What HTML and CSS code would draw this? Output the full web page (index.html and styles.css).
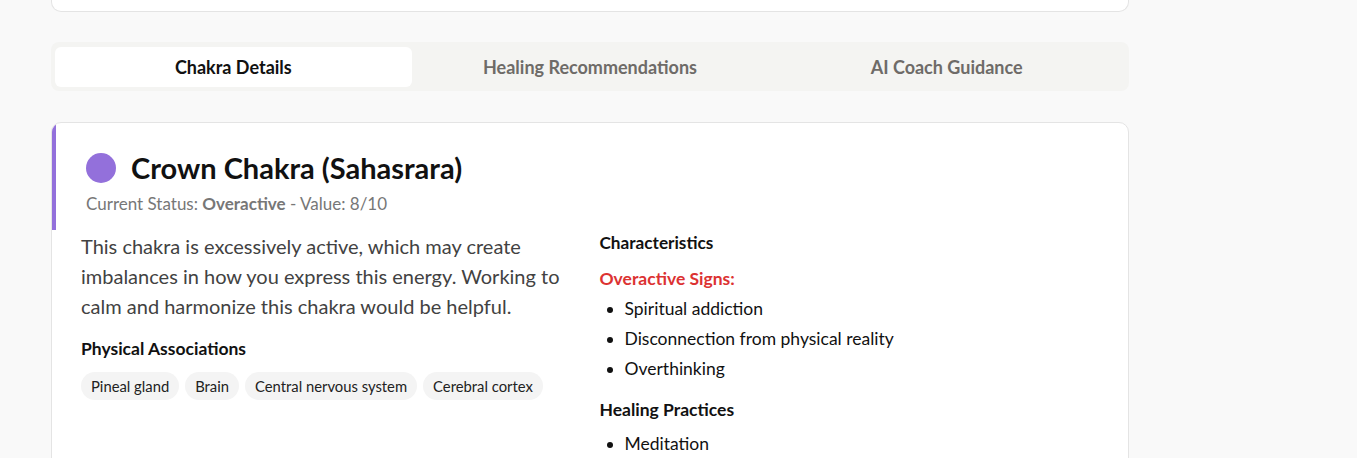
FILE: index.html
```html
<!DOCTYPE html>
<html lang="en">
<head>
<meta charset="utf-8">
<title>Chakra Details</title>
<link rel="stylesheet" href="styles.css">
</head>
<body>
<div class="page">
  <div class="top-card"></div>

  <div class="tabs">
    <button class="tab active">Chakra Details</button>
    <button class="tab">Healing Recommendations</button>
    <button class="tab">AI Coach Guidance</button>
  </div>

  <div class="card">
    <div class="card-header">
      <div class="title-row">
        <span class="dot"></span>
        <h2 class="title">Crown Chakra (Sahasrara)</h2>
      </div>
      <p class="status">Current Status: <strong>Overactive</strong> - Value: 8/10</p>
    </div>
    <div class="card-body">
      <div class="col">
        <p class="desc">This chakra is excessively active, which may create imbalances in how you express this energy. Working to calm and harmonize this chakra would be helpful.</p>
        <h4 class="sub-head">Physical Associations</h4>
        <div class="tags">
          <span class="tag">Pineal gland</span>
          <span class="tag">Brain</span>
          <span class="tag">Central nervous system</span>
          <span class="tag">Cerebral cortex</span>
        </div>
      </div>
      <div class="col">
        <h4 class="sub-head first">Characteristics</h4>
        <p class="signs">Overactive Signs:</p>
        <ul class="list">
          <li>Spiritual addiction</li>
          <li>Disconnection from physical reality</li>
          <li>Overthinking</li>
        </ul>
        <h4 class="sub-head practices">Healing Practices</h4>
        <ul class="list">
          <li>Meditation</li>
        </ul>
      </div>
    </div>
  </div>
</div>
</body>
</html>
```

FILE: styles.css
```css
* { box-sizing: border-box; }

body {
  margin: 0;
  background: #f9f9f9;
  font-family: "Segoe UI", Lato, "Noto Sans", sans-serif;
  color: #111;
}

.page {
  width: 1078px;
  margin-left: 51px;
}

.top-card {
  height: 12px;
  background: #fff;
  border: 1px solid #e4e4e4;
  border-top: none;
  border-radius: 0 0 10px 10px;
}

.tabs {
  margin-top: 30px;
  background: #f4f4f2;
  border-radius: 8px;
  padding: 5px 4px 4px;
  display: grid;
  grid-template-columns: 1fr 1fr 1fr;
}

.tab {
  height: 40px;
  padding: 0;
  border: none;
  background: transparent;
  font-family: inherit;
  font-size: 18px;
  font-weight: 700;
  color: #6e6b68;
  border-radius: 6px;
  cursor: pointer;
}

.tab.active {
  background: #fff;
  color: #111;
}

.card {
  margin-top: 31px;
  background: #fff;
  border: 1px solid #e4e4e4;
  border-radius: 10px;
  overflow: hidden;
  padding-bottom: 40px;
}

.card-header {
  border-left: 4px solid #9370db;
  padding: 27px 30px 14px 30px;
}

.title-row {
  display: flex;
  align-items: center;
  gap: 15px;
}

.dot {
  width: 30px;
  height: 30px;
  border-radius: 50%;
  background: #9370db;
  flex: none;
}

.title {
  margin: 0;
  font-size: 29px;
  line-height: 36px;
  font-weight: 700;
  color: #111;
}

.status {
  margin: 6px 0 0;
  font-size: 17px;
  line-height: 24px;
  color: #777;
}

.status strong {
  font-weight: 700;
}

.card-body {
  display: grid;
  grid-template-columns: 1fr 1fr;
  gap: 20px;
  padding: 1px 30px 0 29px;
}

.desc {
  margin: 0;
  font-size: 20px;
  line-height: 30px;
  color: #424242;
}

.sub-head {
  margin: 16px 0 0;
  font-size: 17.5px;
  line-height: 24px;
  font-weight: 700;
  color: #111;
}

.sub-head.first {
  margin-top: 0;
  font-size: 17.2px;
}

.sub-head.practices {
  margin-top: 14px;
}

.tags {
  display: flex;
  flex-wrap: wrap;
  gap: 6px;
  margin-top: 11px;
}

.tag {
  background: #f4f4f4;
  border-radius: 14px;
  padding: 0 10px;
  height: 28px;
  line-height: 28px;
  font-size: 14.8px;
  color: #222;
}

.signs {
  margin: 12px 0 0;
  font-size: 17.5px;
  line-height: 24px;
  font-weight: 700;
  color: #dc3232;
}

.list {
  margin: 3px 0 0;
  padding-left: 25px;
  font-size: 17.5px;
}

.list li {
  line-height: 30px;
}

.practices + .list {
  margin-top: 7px;
}
```
